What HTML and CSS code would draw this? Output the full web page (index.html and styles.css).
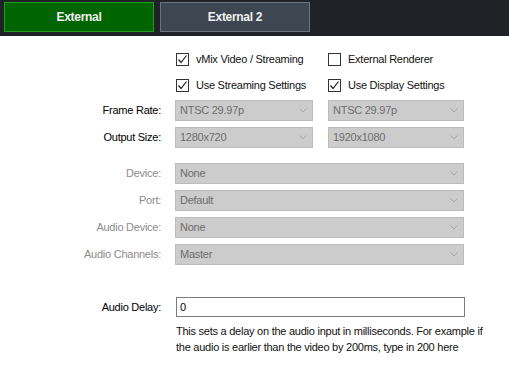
FILE: index.html
```html
<!DOCTYPE html>
<html lang="en">

<head>
    <meta charset="UTF-8">
    <title>External Output</title>
    <link rel="stylesheet" href="styles.css">
</head>

<body>
    <div class="tabs">
        <div class="tab active">External</div>
        <div class="tab">External 2</div>
    </div>

    <div class="form">
        <div class="row check-row">
            <div class="label"></div>
            <label class="check col-a">
                <span class="box"><svg width="11" height="11" viewBox="0 0 11 11"><polyline points="1.5,5.5 4,8.5 9.5,1.5" fill="none" stroke="#222" stroke-width="1.2"/></svg></span>
                vMix Video / Streaming
            </label>
            <label class="check col-b">
                <span class="box"></span>
                External Renderer
            </label>
        </div>
        <div class="row check-row">
            <div class="label"></div>
            <label class="check col-a">
                <span class="box"><svg width="11" height="11" viewBox="0 0 11 11"><polyline points="1.5,5.5 4,8.5 9.5,1.5" fill="none" stroke="#222" stroke-width="1.2"/></svg></span>
                Use Streaming Settings
            </label>
            <label class="check col-b">
                <span class="box"><svg width="11" height="11" viewBox="0 0 11 11"><polyline points="1.5,5.5 4,8.5 9.5,1.5" fill="none" stroke="#222" stroke-width="1.2"/></svg></span>
                Use Display Settings
            </label>
        </div>

        <div class="row combo-row first">
            <div class="label">Frame Rate:</div>
            <div class="combo col-a">NTSC 29.97p<svg class="arrow" width="8" height="5" viewBox="0 0 8 5"><polyline points="0.5,0.5 4,4 7.5,0.5" fill="none" stroke="#a8a8a8"/></svg></div>
            <div class="combo col-b">NTSC 29.97p<svg class="arrow" width="8" height="5" viewBox="0 0 8 5"><polyline points="0.5,0.5 4,4 7.5,0.5" fill="none" stroke="#a8a8a8"/></svg></div>
        </div>
        <div class="row combo-row">
            <div class="label">Output Size:</div>
            <div class="combo col-a">1280x720<svg class="arrow" width="8" height="5" viewBox="0 0 8 5"><polyline points="0.5,0.5 4,4 7.5,0.5" fill="none" stroke="#a8a8a8"/></svg></div>
            <div class="combo col-b">1920x1080<svg class="arrow" width="8" height="5" viewBox="0 0 8 5"><polyline points="0.5,0.5 4,4 7.5,0.5" fill="none" stroke="#a8a8a8"/></svg></div>
        </div>

        <div class="row combo-row group disabled">
            <div class="label">Device:</div>
            <div class="combo wide">None<svg class="arrow" width="8" height="5" viewBox="0 0 8 5"><polyline points="0.5,0.5 4,4 7.5,0.5" fill="none" stroke="#a8a8a8"/></svg></div>
        </div>
        <div class="row combo-row disabled">
            <div class="label">Port:</div>
            <div class="combo wide">Default<svg class="arrow" width="8" height="5" viewBox="0 0 8 5"><polyline points="0.5,0.5 4,4 7.5,0.5" fill="none" stroke="#a8a8a8"/></svg></div>
        </div>
        <div class="row combo-row disabled">
            <div class="label">Audio Device:</div>
            <div class="combo wide">None<svg class="arrow" width="8" height="5" viewBox="0 0 8 5"><polyline points="0.5,0.5 4,4 7.5,0.5" fill="none" stroke="#a8a8a8"/></svg></div>
        </div>
        <div class="row combo-row disabled">
            <div class="label">Audio Channels:</div>
            <div class="combo wide">Master<svg class="arrow" width="8" height="5" viewBox="0 0 8 5"><polyline points="0.5,0.5 4,4 7.5,0.5" fill="none" stroke="#a8a8a8"/></svg></div>
        </div>

        <div class="row delay-row">
            <div class="label">Audio Delay:</div>
            <input class="text-input" type="text" value="0">
        </div>
        <p class="help">This sets a delay on the audio input in milliseconds. For example if<br>the audio is earlier than the video by 200ms, type in 200 here</p>
    </div>
</body>

</html>
```

FILE: styles.css
```css
body {
    margin: 0;
    background: #fff;
    font: 11px/13px "Liberation Sans", Arial, sans-serif;
    letter-spacing: -0.25px;
    color: #000;
}

.tabs {
    display: flex;
    gap: 6px;
    height: 36px;
    box-sizing: border-box;
    padding: 2px 4px;
    background: #1f2227;
}

.tab {
    width: 150px;
    height: 30px;
    box-sizing: border-box;
    border: 1px solid #6b7581;
    background: #3d4651;
    color: #f0f0f0;
    font-size: 12px;
    font-weight: bold;
    letter-spacing: -0.3px;
    display: flex;
    align-items: center;
    justify-content: center;
}

.tab.active {
    background: #006400;
    border-color: #1e9e1e;
}

.form {
    padding-top: 10px;
}

.row {
    display: flex;
    align-items: center;
}

.label {
    width: 161px;
    margin-right: 14px;
    text-align: right;
    flex-shrink: 0;
}

.col-a {
    width: 138px;
}

.col-b {
    width: 136px;
    margin-left: 15px;
}

.check-row {
    height: 26px;
}

.check {
    display: flex;
    align-items: center;
    box-sizing: border-box;
    padding-left: 1px;
    white-space: nowrap;
    color: #111;
}

.check.col-b {
    padding-left: 0;
    margin-left: 15px;
}

.box {
    width: 13px;
    height: 13px;
    box-sizing: border-box;
    border: 1px solid #333;
    background: #fff;
    margin-right: 7px;
    display: flex;
    align-items: center;
    justify-content: center;
    flex-shrink: 0;
}

.combo-row {
    height: 21px;
    margin-top: 6px;
}

.combo-row.first {
    margin-top: 2px;
}

.combo-row.group {
    margin-top: 15px;
}

.combo {
    height: 21px;
    box-sizing: border-box;
    border: 1px solid #bcbcbc;
    background: #cccccc;
    color: #6d6d6d;
    padding: 0 5px 0 4px;
    display: flex;
    align-items: center;
    justify-content: space-between;
}

.combo.wide {
    width: 289px;
}

.disabled .label {
    color: #8c8c8c;
}

.delay-row {
    height: 20px;
    margin-top: 32px;
}

.text-input {
    width: 289px;
    height: 20px;
    box-sizing: border-box;
    margin: 0 0 0 1px;
    border: 1px solid #7a7a7a;
    padding: 0 3px;
    font: inherit;
    color: #000;
    outline: none;
}

.help {
    margin: 6px 0 0 176px;
    line-height: 16px;
    color: #111;
}
```
